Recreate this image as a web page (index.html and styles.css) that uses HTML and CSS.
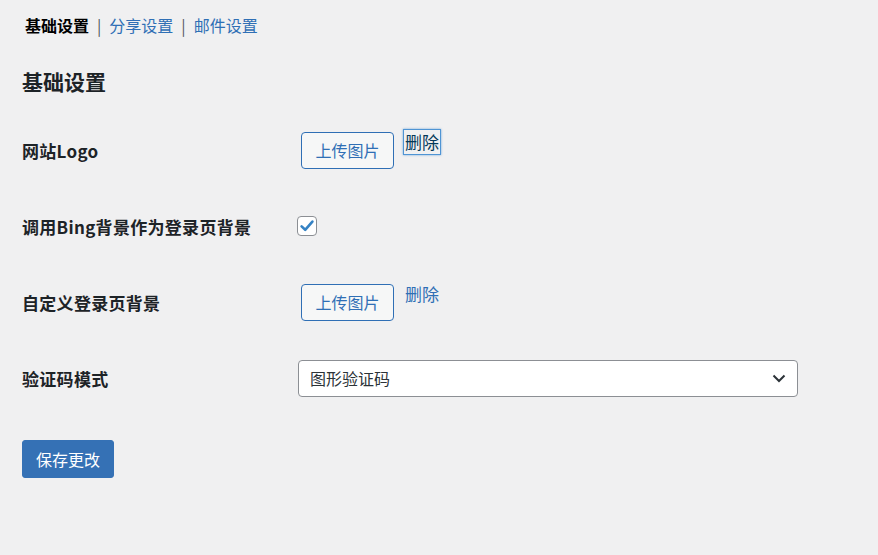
FILE: index.html
```html
<!DOCTYPE html>
<html lang="zh-CN">

<head>
    <meta charset="UTF-8">
    <meta name="viewport" content="width=device-width, initial-scale=1.0">
    <title>基础设置</title>
    <link rel="stylesheet" href="styles.css">
</head>

<body>
    <div class="wrap">
        <ul class="subnav">
            <li><a class="current" href="#">基础设置</a></li>
            <li class="sep">|</li>
            <li><a href="#">分享设置</a></li>
            <li class="sep">|</li>
            <li><a href="#">邮件设置</a></li>
        </ul>

        <h2 class="title">基础设置</h2>

        <div class="form-table">
            <div class="row">
                <div class="label">网站Logo</div>
                <div class="field">
                    <button class="btn">上传图片</button>
                    <a class="del focused" href="#">删除</a>
                </div>
            </div>
            <div class="row">
                <div class="label">调用Bing背景作为登录页背景</div>
                <div class="field">
                    <span class="checkbox">
                        <svg width="16" height="16" viewBox="0 0 16 16">
                            <path d="M2.6 8.4 L6.2 11.8 L13.4 3.6" fill="none" stroke="#3582c4" stroke-width="2.6"
                                stroke-linecap="round" stroke-linejoin="round" />
                        </svg>
                    </span>
                </div>
            </div>
            <div class="row">
                <div class="label">自定义登录页背景</div>
                <div class="field">
                    <button class="btn">上传图片</button>
                    <a class="del" href="#">删除</a>
                </div>
            </div>
            <div class="row">
                <div class="label">验证码模式</div>
                <div class="field">
                    <div class="select">
                        <span>图形验证码</span>
                        <svg width="14" height="9" viewBox="0 0 14 9">
                            <path d="M1.5 1.5 L7 7 L12.5 1.5" fill="none" stroke="#2c3338" stroke-width="2" />
                        </svg>
                    </div>
                </div>
            </div>
        </div>

        <button class="btn-primary">保存更改</button>
    </div>
</body>

</html>
```

FILE: styles.css
```css
body {
    margin: 0;
    background-color: #f0f0f1;
    color: #1d2327;
    font-family: "Noto Sans CJK SC", "Noto Sans", sans-serif;
}

.wrap {
    padding: 0 0 0 22px;
}

a {
    color: #2f6fb5;
    text-decoration: none;
}

.subnav {
    list-style: none;
    margin: 0;
    padding: 13px 0 0 3px;
    display: flex;
    font-size: 16px;
    line-height: 24px;
}

.subnav .current {
    color: #000;
    font-weight: 600;
}

.subnav .sep {
    color: #50575e;
    margin: 0 8px;
}

.title {
    margin: 0;
    padding-top: 29px;
    font-size: 21px;
    line-height: 30px;
    font-weight: 600;
}

.form-table {
    margin-top: 16px;
}

.row {
    display: flex;
    align-items: center;
    height: 76px;
}

.label {
    width: 275px;
    font-size: 17px;
    font-weight: 600;
    letter-spacing: 0.3px;
}

.field {
    display: flex;
    align-items: flex-start;
}

.btn {
    width: 93px;
    height: 37px;
    margin-left: 4px;
    border: 1px solid #2f6fb5;
    border-radius: 4px;
    background-color: #f6f7f7;
    color: #2f6fb5;
    font-family: inherit;
    font-size: 16px;
    padding: 0;
}

.del {
    margin: -2px 0 0 10px;
    font-size: 17px;
    line-height: 24px;
    padding: 0 1px;
}

.del.focused {
    color: #043959;
    box-shadow: 0 0 0 1px #4f94d4, 0 0 2px 1px rgba(79, 148, 212, 0.8);
}

.checkbox {
    width: 18px;
    height: 18px;
    border: 1px solid #8c8f94;
    border-radius: 4px;
    background-color: #fff;
    display: flex;
    align-items: center;
    justify-content: center;
}

.select {
    height: 35px;
    margin-left: 1px;
    border: 1px solid #8c8f94;
    border-radius: 4px;
    background-color: #fff;
    display: flex;
    align-items: center;
    justify-content: space-between;
    padding: 0 11px;
    width: 476px;
    font-size: 16px;
    color: #2c3338;
}

.btn-primary {
    margin-top: 24px;
    width: 92px;
    height: 38px;
    border: 1px solid #3571b5;
    border-radius: 3px;
    background-color: #3571b5;
    color: #fff;
    font-family: inherit;
    font-size: 16px;
    padding: 0;
}
```
